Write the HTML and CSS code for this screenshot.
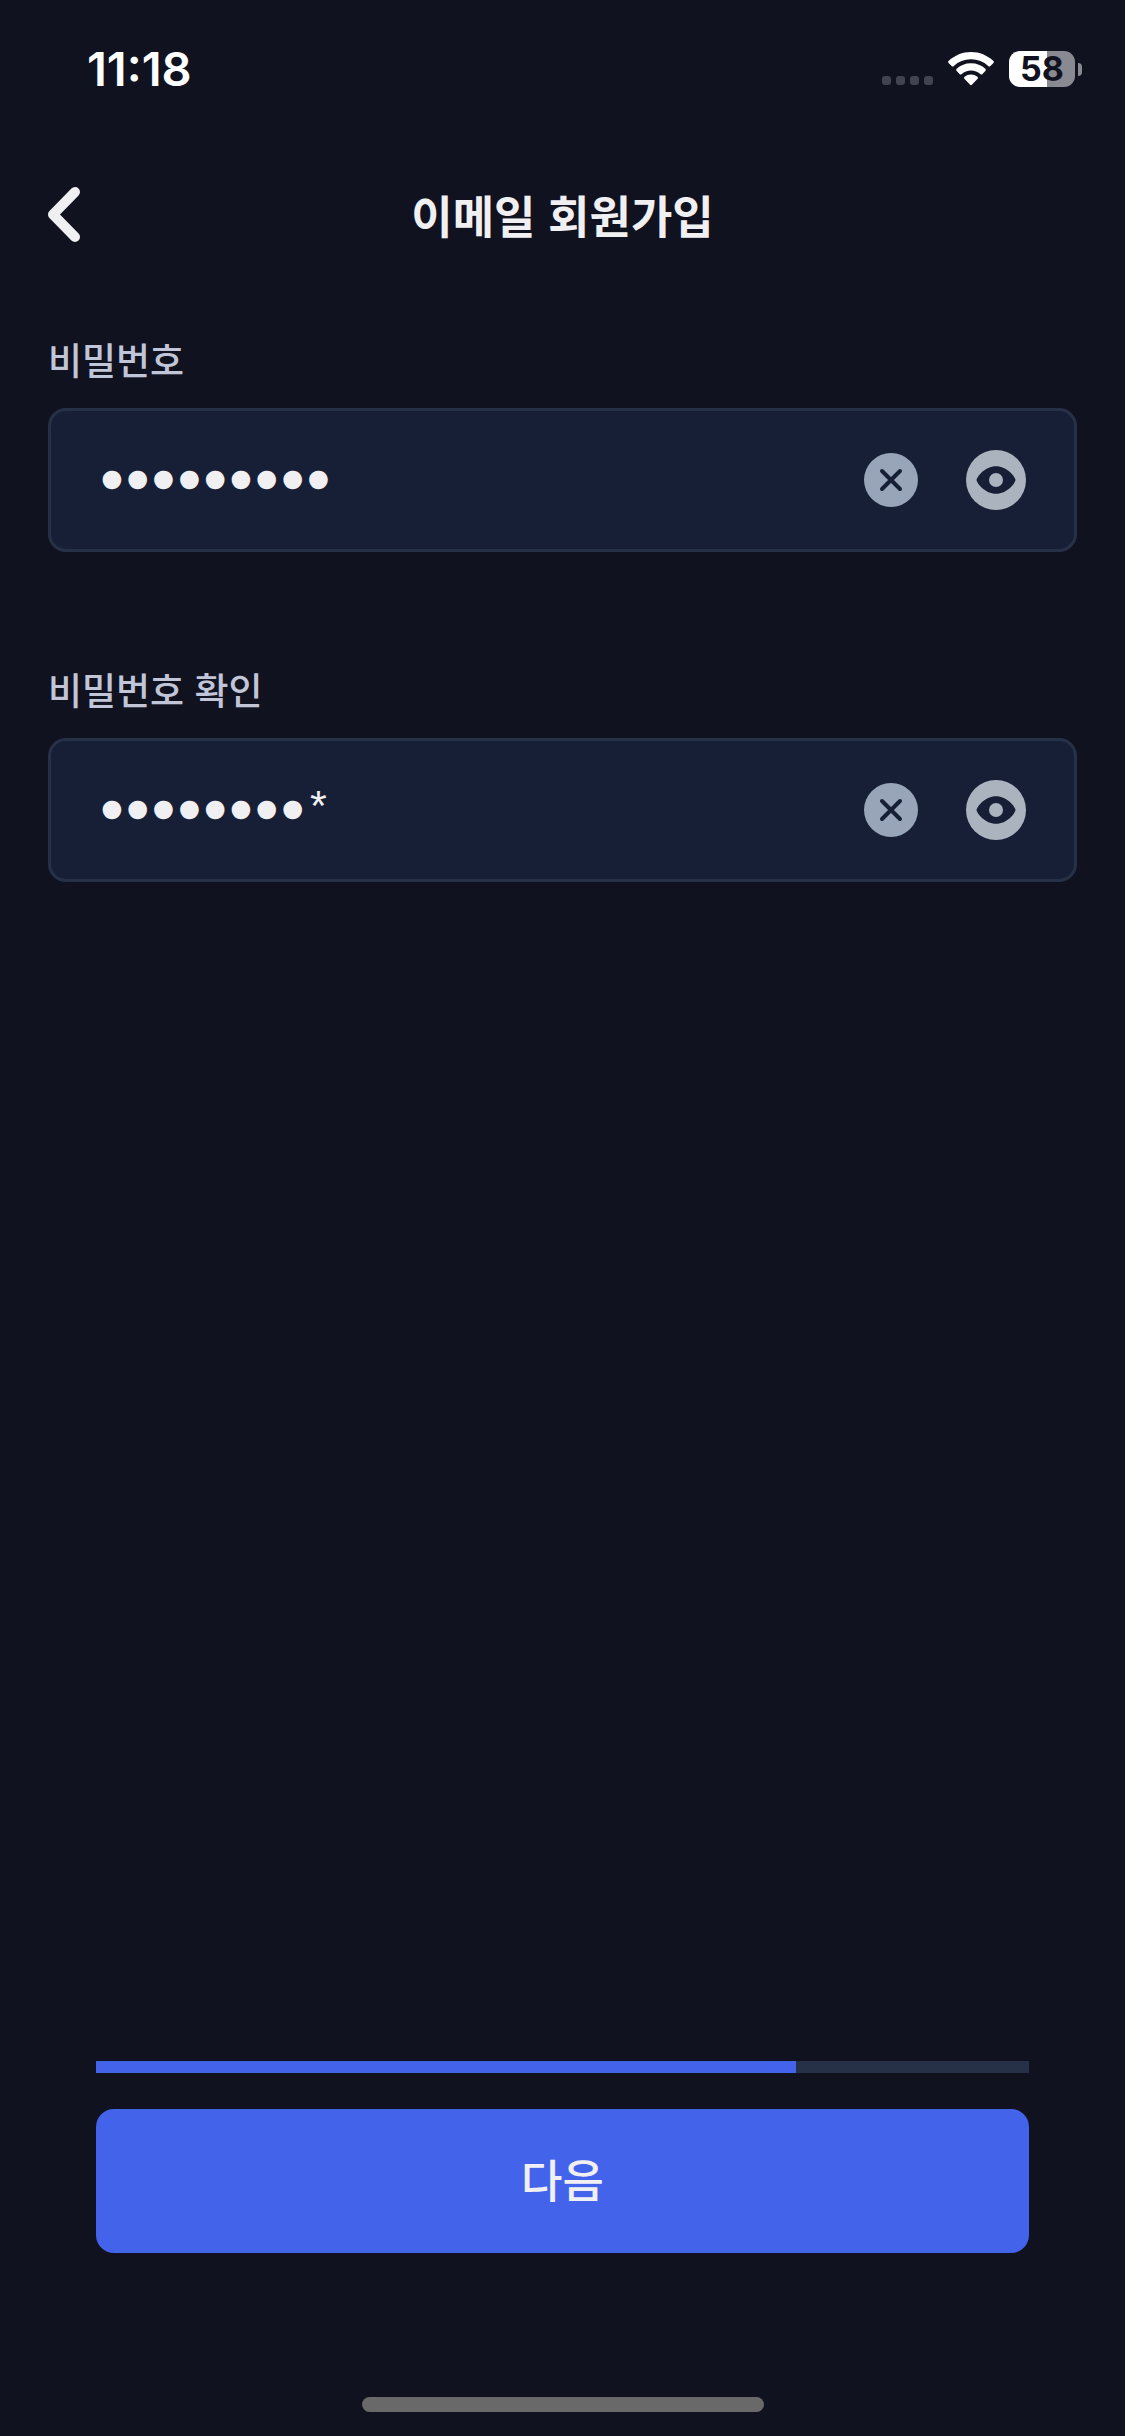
FILE: index.html
```html
<!DOCTYPE html>
<html lang="ko">
<head>
<meta charset="utf-8">
<meta name="viewport" content="width=device-width, initial-scale=1">
<title>이메일 회원가입</title>
<link rel="stylesheet" href="styles.css">
</head>
<body>
<div class="screen">
  <div class="status-bar">
    <time class="clock">11:18</time>
    <div class="status-icons">
      <div class="signal"><i></i><i></i><i></i><i></i></div>
      <svg class="wifi" viewBox="0 0 46 34" aria-hidden="true">
        <path d="M.8 11.2a1.6 1.6 0 0 1 0-2.4C6.600 3.400 14.500 0 23 0s16.400 3.400 22.200 8.800a1.600 1.600 0 0 1 0 2.400l-2.800 2.700a1.600 1.600 0 0 1-2.200 0A25 25 0 0 0 23 7.300 25 25 0 0 0 5.800 13.900a1.600 1.600 0 0 1-2.200 0z"/>
        <path d="M8.700 19.100a1.600 1.600 0 0 1 0-2.400A21 21 0 0 1 23 11.200a21 21 0 0 1 14.300 5.500 1.600 1.600 0 0 1 0 2.400l-2.800 2.800a1.600 1.600 0 0 1-2.200 0A13.800 13.800 0 0 0 23 18.400a13.800 13.800 0 0 0-9.300 3.500 1.600 1.600 0 0 1-2.200 0z"/>
        <path d="M16.600 27a1.500 1.500 0 0 1 0-2.300A10 10 0 0 1 23 22.500a10 10 0 0 1 6.400 2.200 1.500 1.500 0 0 1 0 2.300l-5.300 5.600a1.500 1.500 0 0 1-2.200 0z"/>
      </svg>
      <div class="battery">
        <span class="battery-level">58</span>
        <i class="battery-tip"></i>
      </div>
    </div>
  </div>

  <header class="top-bar">
    <button class="back" type="button" aria-label="뒤로">
      <svg viewBox="0 0 32 56" aria-hidden="true"><path d="M27 5 5 27.500 27 50"/></svg>
    </button>
    <h1 class="title">이메일 회원가입</h1>
  </header>

  <form class="form">
    <div class="fields">
      <div class="field">
        <label class="label" for="password">비밀번호</label>
        <div class="box">
          <input class="input" id="password" type="text" value="●●●●●●●●●" autocomplete="off">
          <button class="icon-button" type="button" aria-label="지우기">
            <svg class="clear" viewBox="0 0 54 54" aria-hidden="true"><circle cx="27" cy="27" r="27"/><path d="m18 18 18 18M36 18 18 36"/></svg>
          </button>
          <button class="icon-button" type="button" aria-label="비밀번호 표시">
            <svg class="eye" viewBox="0 0 60 60" aria-hidden="true"><circle cx="30" cy="30" r="30"/><path d="M10.500 30C11 26.500 19 16.200 30 16.200S49 26.500 49.500 30C49 33.500 41 43.800 30 43.800S11 33.500 10.500 30z"/><circle cx="30" cy="30" r="7"/></svg>
          </button>
        </div>
      </div>
      <div class="field">
        <label class="label" for="password-confirm">비밀번호 확인</label>
        <div class="box">
          <input class="input" id="password-confirm" type="text" value="●●●●●●●●*" autocomplete="off">
          <button class="icon-button" type="button" aria-label="지우기">
            <svg class="clear" viewBox="0 0 54 54" aria-hidden="true"><circle cx="27" cy="27" r="27"/><path d="m18 18 18 18M36 18 18 36"/></svg>
          </button>
          <button class="icon-button" type="button" aria-label="비밀번호 표시">
            <svg class="eye" viewBox="0 0 60 60" aria-hidden="true"><circle cx="30" cy="30" r="30"/><path d="M10.500 30C11 26.500 19 16.200 30 16.200S49 26.500 49.500 30C49 33.500 41 43.800 30 43.800S11 33.500 10.500 30z"/><circle cx="30" cy="30" r="7"/></svg>
          </button>
        </div>
      </div>
    </div>
    <div class="actions">
      <div class="progress" role="progressbar" aria-label="가입 진행률" aria-valuenow="75" aria-valuemin="0" aria-valuemax="100">
        <div class="progress-fill" style="width: 75%"></div>
      </div>
      <button class="next" type="submit">다음</button>
    </div>
  </form>
  <div class="home-indicator"></div>
</div>
</body>
</html>
```
FILE: styles.css
```css
* {
  box-sizing: border-box;
}

body {
  margin: 0;
  background: #111220;
  color: #f0f0f3;
  font-family: "Noto Sans CJK KR", sans-serif;
}

button {
  padding: 0;
  border: 0;
  background: none;
  color: inherit;
  font: inherit;
}

svg {
  display: block;
}

.screen {
  display: flex;
  flex-direction: column;
  min-height: 100vh;
  padding-bottom: 24px;
}

.status-bar {
  display: flex;
  align-items: center;
  justify-content: space-between;
  height: 138px;
  padding: 0 43px 0 87px;
  color: #fff;
  font-family: Inter, sans-serif;
  font-weight: 600;
}

.clock {
  font-size: 47px;
  line-height: 48px;
}

.status-icons {
  display: flex;
  align-items: center;
}

.signal {
  display: flex;
  gap: 5px;
  align-self: flex-end;
  margin: 0 15px 2px 0;
}

.signal i {
  width: 9px;
  height: 9px;
  border-radius: 3px;
  background: #424350;
}

.wifi {
  width: 46px;
  height: 34px;
  margin-right: 15px;
  fill: #fff;
}

.battery {
  display: flex;
  align-items: center;
  gap: 3px;
}

.battery-level {
  width: 66px;
  height: 36px;
  border-radius: 11px;
  background: linear-gradient(90deg, #fff 58%, #888991 58%);
  color: #111220;
  font-size: 34px;
  font-weight: 700;
  line-height: 36px;
  text-align: center;
}

.battery-tip {
  width: 4px;
  height: 13px;
  border-radius: 0 4px 4px 0;
  background: #888991;
}

.top-bar {
  display: grid;
  grid-template-columns: 96px 1fr 96px;
  align-items: center;
  height: 153px;
  padding: 0 48px;
}

.back {
  width: 32px;
  height: 56px;
}

.back svg {
  width: 32px;
  height: 56px;
  fill: none;
  stroke: #f0f0f3;
  stroke-width: 10;
  stroke-linecap: round;
  stroke-linejoin: round;
}

.title {
  margin: 0;
  font-size: 45px;
  font-weight: 700;
  line-height: 60px;
  text-align: center;
}

.form {
  display: flex;
  flex: 1;
  flex-direction: column;
  justify-content: space-between;
  padding-top: 45px;
}

.fields {
  display: flex;
  flex-direction: column;
  gap: 114px;
  padding: 0 48px;
}

.field {
  display: flex;
  flex-direction: column;
  gap: 26px;
}

.label {
  color: #c1c5d8;
  font-size: 37px;
  font-weight: 500;
  line-height: 46px;
}

.box {
  display: flex;
  align-items: center;
  gap: 48px;
  height: 144px;
  padding: 0 48px;
  border: 3px solid #263148;
  border-radius: 18px;
  background: #171f36;
}

.input {
  flex: 1;
  min-width: 0;
  height: 100%;
  padding: 0;
  border: 0;
  outline: 0;
  background: none;
  color: #f0f0f3;
  font-family: "Liberation Mono", monospace;
  font-size: 43px;
}

.clear {
  width: 54px;
  height: 54px;
  fill: #98a4b8;
  stroke-width: 4;
  stroke-linecap: round;
}

.clear path {
  stroke: #171f36;
}

.eye {
  width: 60px;
  height: 60px;
  fill: #abb3be;
}

.eye path {
  fill: #171f36;
}

.actions {
  display: flex;
  flex-direction: column;
  gap: 36px;
  padding: 0 96px;
  margin-bottom: 144px;
}

.progress {
  height: 12px;
  background: #263148;
}

.progress-fill {
  height: 100%;
  background: #4463eb;
}

.next {
  height: 144px;
  padding-bottom: 6px;
  border-radius: 18px;
  background: #4463eb;
  font-size: 45px;
  font-weight: 500;
}

.home-indicator {
  align-self: center;
  width: 402px;
  height: 15px;
  border-radius: 8px;
  background: #69696a;
}
```
